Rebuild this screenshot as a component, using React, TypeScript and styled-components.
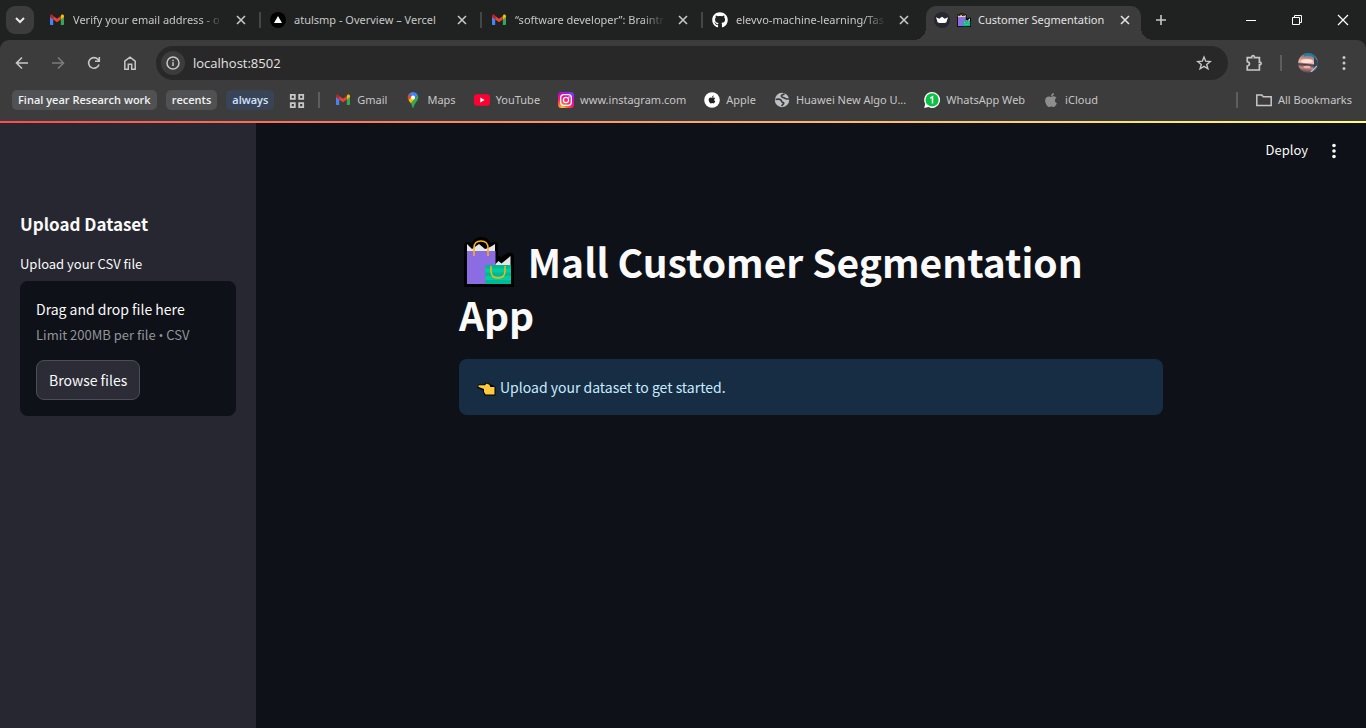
import React from "react";
import styled, { createGlobalStyle, css } from "styled-components";
import { FaApple, FaGithub } from "react-icons/fa";

const labelFont = `"Noto Sans", "Open Sans", sans-serif`;
const uiFont = `"Open Sans", "Noto Sans", sans-serif`;
const appFont = `"Noto Sans CJK SC", "Noto Sans", sans-serif`;

const GlobalStyle = createGlobalStyle`
  * { box-sizing: border-box; }
  html, body { margin: 0; background: #0e1117; }
  button { border: 0; padding: 0; background: none; color: inherit; font: inherit; cursor: pointer; }
  a { color: inherit; text-decoration: none; }
  svg { display: block; flex: none; }
`;

const Page = styled.div`
  min-height: 100vh;
  display: flex;
  flex-direction: column;
`;

const Chrome = styled.header`
  background: #202222;
  color: #c7c7c7;
  font-family: ${labelFont};
  font-size: 11px;
`;

const TabStrip = styled.div`
  display: flex;
  align-items: center;
  height: 40px;
  padding-left: 6px;
`;

const TabSearch = styled.button`
  display: grid;
  place-items: center;
  flex: none;
  width: 28px;
  height: 28px;
  margin-right: 6px;
  border-radius: 9px;
  background: #3c3c3c;
  color: #e8e8e8;
`;

const Tabs = styled.nav`
  display: flex;
  flex: 0 1 1101px;
  min-width: 0;
`;

const Tab = styled.div<{ $active?: boolean; $divider?: boolean }>`
  display: flex;
  align-items: center;
  gap: 8px;
  flex: 0 1 221px;
  min-width: 0;
  height: 40px;
  padding: 0 10px 0 9px;
  position: relative;
  ${(p) =>
    p.$divider &&
    css`
      background: linear-gradient(#454746, #454746) right center / 2px 16px no-repeat;
    `}
  ${(p) =>
    p.$active &&
    css`
      flex-basis: 215px;
      gap: 7px;
      height: 34px;
      margin: 6px 0 0 2px;
      padding: 0 6px 6px 8px;
      border-radius: 10px 10px 0 0;
      background: #3c3c3c;
      color: #e3e3e3;
      &::before,
      &::after {
        content: "";
        position: absolute;
        bottom: 0;
        width: 12px;
        height: 12px;
      }
      &::before {
        right: 100%;
        background: radial-gradient(circle at 0 0, transparent 12px, #3c3c3c 12px);
      }
      &::after {
        left: 100%;
        background: radial-gradient(circle at 100% 0, transparent 12px, #3c3c3c 12px);
      }
    `}
`;

const TabTitle = styled.a<{ $fade?: boolean }>`
  flex: 1;
  min-width: 0;
  overflow: hidden;
  white-space: nowrap;
  line-height: 20px;
  ${(p) => p.$fade && css`mask-image: linear-gradient(to right, #000 85%, transparent);`}
`;

const IconButton = styled.button<{ $size?: number; $dim?: boolean }>`
  display: grid;
  place-items: center;
  flex: none;
  width: ${(p) => p.$size ?? 36}px;
  height: ${(p) => p.$size ?? 36}px;
  ${(p) => p.$dim && css`color: #7b7b7b;`}
`;

const WindowControls = styled.div`
  display: flex;
  margin-left: auto;
  color: #fff;
`;

const WindowButton = styled.button`
  display: grid;
  place-items: center;
  width: 46px;
  height: 40px;
`;

const Toolbar = styled.div`
  display: flex;
  align-items: center;
  height: 46px;
  padding: 0 4px;
  border-radius: 9px 9px 0 0;
  background: #3c3c3c;
`;

const AddressBar = styled.form`
  display: flex;
  align-items: center;
  flex: 1;
  gap: 8px;
  height: 34px;
  margin: 0 8px;
  padding: 0 6px 0 5px;
  border-radius: 17px;
  background: #282828;
`;

const SiteInfo = styled.button`
  display: grid;
  place-items: center;
  width: 24px;
  height: 24px;
  border-radius: 50%;
  background: #3c3c3c;
`;

const Address = styled.input`
  flex: 1;
  min-width: 0;
  border: 0;
  padding: 0;
  outline: 0;
  background: none;
  color: #e3e3e3;
  font: 13px/20px ${uiFont};
`;

const Divider = styled.span`
  flex: none;
  width: 2px;
  height: 16px;
  background: #5e5e5e;
`;

const ProfileArea = styled.div`
  display: flex;
  align-items: center;
  gap: 16px;
  margin: 0 8px;
`;

const Bookmarks = styled.nav`
  display: flex;
  align-items: center;
  gap: 15px;
  height: 35px;
  padding: 0 14px 7px 12px;
  background: #3c3c3c;
  white-space: nowrap;
`;

const Groups = styled.div`
  display: flex;
  gap: 9px;
`;

const Group = styled.button<{ $blue?: boolean }>`
  height: 20px;
  padding: 0 6px;
  border-radius: 5px;
  background: ${(p) => (p.$blue ? "#394457" : "#4f5152")};
  color: ${(p) => (p.$blue ? "#d3e3fd" : "#f1f1f1")};
  font: 600 11px/20px ${uiFont};
`;

const BookmarkList = styled.div`
  display: flex;
  align-items: center;
  gap: 18px;
`;

const Bookmark = styled.a`
  display: flex;
  align-items: center;
  gap: 6px;
  line-height: 20px;
`;

const BookmarksEnd = styled(BookmarkList)`
  margin-left: auto;
`;

const Decoration = styled.div`
  height: 2px;
  background: linear-gradient(to right, #ff4b4b, #ffff80);
`;

const AppShell = styled.div`
  display: flex;
  flex: 1;
  color: #fafafa;
  font-family: ${appFont};
`;

const Sidebar = styled.aside`
  flex: none;
  width: 256px;
  padding: 87px 20px 24px;
  background: #262730;
`;

const SidebarTitle = styled.h2`
  margin: 0 0 16px;
  font-size: 17px;
  line-height: 28px;
  font-weight: 700;
`;

const UploadLabel = styled.label`
  display: block;
  margin-bottom: 7px;
  font-size: 13px;
  line-height: 20px;
`;

const Dropzone = styled.section`
  padding: 15px 16px 16px;
  border-radius: 8px;
  background: #0e1117;
`;

const DropText = styled.div`
  font-size: 14px;
  line-height: 26px;
`;

const DropHint = styled.small`
  display: block;
  margin-bottom: 12px;
  color: #93959a;
  font-size: 13px;
  line-height: 26px;
`;

const Bullet = styled.span`
  font-family: ${uiFont};
  line-height: 1;
`;

const BrowseButton = styled.button`
  height: 40px;
  padding: 0 12px;
  border: 1px solid #4c4d55;
  border-radius: 8px;
  background: #2b2c36;
  font: 14px/24px ${appFont};
`;

const Main = styled.main`
  flex: 1;
  min-width: 0;
`;

const AppHeader = styled.div`
  display: flex;
  justify-content: flex-end;
  align-items: center;
  gap: 18px;
  height: 56px;
  padding: 0 24px;
  font-size: 13px;
`;

const DeployButton = styled.button`
  padding-bottom: 3px;
`;

const Content = styled.div`
  max-width: 704px;
  margin: 0 auto;
  padding-top: 56px;
`;

const Title = styled.h1`
  margin: 0 0 18px;
  font-size: 39px;
  line-height: 53px;
  font-weight: 700;
  svg { display: inline-block; vertical-align: -9px; margin: 0 5px; }
`;

const Alert = styled.div`
  display: flex;
  align-items: center;
  gap: 4px;
  padding: 16px 18px;
  border-radius: 8px;
  background: #172d43;
  color: #c7ebff;
  font-size: 14px;
  line-height: 24px;
  svg { margin-top: 4px; }
`;

const Gmail = () => (
  <svg width="16" height="16" viewBox="0 0 16 16">
    <path d="M1 4.500v7.600c0 .6.4 1 1 1h2.200V6.900z" fill="#4285f4" />
    <path d="M15 4.500v7.600c0 .6-.4 1-1 1h-2.200V6.900z" fill="#34a853" />
    <path d="M11.800 4v3.400L15 5V4c0-1.500-1.600-2-2.600-1.300z" fill="#fbbc04" />
    <path d="M4.200 7.400V4L8 6.800 11.800 4v3.400L8 10.300z" fill="#ea4335" />
    <path d="M1 4v1l3.200 2.400V4l-.6-1.300C2.600 2 1 2.500 1 4z" fill="#c5221f" />
  </svg>
);

const Vercel = () => (
  <svg width="16" height="16" viewBox="0 0 16 16">
    <circle cx="8" cy="8" r="8" fill="#000" />
    <path d="M8 4l4 7H4z" fill="#fff" />
  </svg>
);

const Crown = () => (
  <svg width="16" height="16" viewBox="0 0 16 16">
    <circle cx="8" cy="8" r="8" fill="#262730" />
    <path d="M2 5.300l3.200 1.500L8 4.800l2.800 2L14 5.300l-1.700 5.200q-4.300 1-8.600 0z" fill="#fff" />
  </svg>
);

const Bags = ({ size }: { size: number }) => (
  <svg width={size} height={size} viewBox="0 0 50 50">
    <path d="M0 50V9q1-5 5-4l3 1Q11 0 17 0q7 0 9 6l3-1q5-1 5 4v10l3 1 7-4q6-1 6 4v30z" fill="#000" />
    <path d="M3 14V7l4 4 1 1 7-5 6 5 3-1 4-2 3-2v7z" fill="#e6e6e6" />
    <path d="M3 14h28.500v33H3z" fill="#8c6ce3" />
    <path d="M31.500 28v-1l3-3 3 2.500 9-7.500V28z" fill="#e6e6e6" />
    <path d="M21.500 28H47v19H21.500z" fill="#00b894" />
    <path d="M21.500 31.500H47v4H21.500zM21.500 39H47v4H21.500z" fill="#00ce9f" />
    <path d="M10 19V11q0-7 7-7t7 7v8" fill="none" stroke="#fdb50a" strokeWidth="1.500" />
    <path d="M27 29v5q0 7 7 7t7-7v-5" fill="none" stroke="#fdb50a" strokeWidth="1.500" />
  </svg>
);

const Hand = () => (
  <svg width="19" height="16" viewBox="0 0 19 16">
    <path d="M1 3.500h6L9 1.500l4 1.500 5.500 3v8.500H7.500L5.500 9 .5 7z" fill="#000" />
    <path d="M1.300 5c0-.5.400-.8 1-.8H8l1.500-1.700 3 1.300.8 2.200H17.500v7.500H8.600L7 11V8L2.300 6.200c-.7-.2-1-.6-1-1.200z" fill="#ffc83d" />
  </svg>
);

const Close = () => (
  <svg width="10" height="10" viewBox="0 0 10 10" fill="none" stroke="currentColor" strokeWidth="1.600">
    <path d="M1 1l8 8M9 1L1 9" />
  </svg>
);

const Dots = ({ r = 1.5 }: { r?: number }) => (
  <svg width="16" height="16" viewBox="0 0 16 16" fill="currentColor">
    <circle cx="8" cy="2.500" r={r} />
    <circle cx="8" cy="8" r={r} />
    <circle cx="8" cy="13.500" r={r} />
  </svg>
);

const Line = ({ d, size = 16, width = 1.6 }: { d: string; size?: number; width?: number }) => (
  <svg width={size} height={size} viewBox="0 0 16 16" fill="none" stroke="currentColor" strokeWidth={width}>
    <path d={d} />
  </svg>
);

const Maps = () => (
  <svg width="16" height="16" viewBox="0 0 16 16">
    <path d="M3.800 2.100L6.600 4.400 3.500 8A5.500 5.500 0 0 1 3.800 2.100z" fill="#ea4335" />
    <path d="M3.800 2.100A5.400 5.400 0 0 1 12.800 3.100L9.700 6.500 6.600 4.400z" fill="#4285f4" />
    <path d="M12.800 3.100a5.500 5.500 0 0 1-.5 5.300C10.500 11 9.200 12.500 8.600 15.300c-.2.900-1 .9-1.200 0C7 13.600 6.500 12.300 5.700 11z" fill="#34a853" />
    <path d="M3.500 8l3.100-3.600 3.200 2.400-4.100 4.400C4.900 10 4 9 3.500 8z" fill="#fbbc04" />
    <circle cx="8" cy="5.400" r="2" fill="#fff" />
  </svg>
);

const YouTube = () => (
  <svg width="16" height="16" viewBox="0 0 16 16">
    <rect y="2.300" width="16" height="11.400" rx="3" fill="#ff0033" />
    <path d="M6.300 5.500v5L10.600 8z" fill="#fff" />
  </svg>
);

const Instagram = () => (
  <svg width="16" height="16" viewBox="0 0 16 16">
    <defs>
      <radialGradient id="ig" cx="0.25" cy="1.050" r="1.100">
        <stop offset="0" stopColor="#fd5" />
        <stop offset="0.25" stopColor="#ff7a2f" />
        <stop offset="0.550" stopColor="#ff1b6b" />
        <stop offset="0.850" stopColor="#d300c5" />
        <stop offset="1" stopColor="#7638fa" />
      </radialGradient>
    </defs>
    <rect width="16" height="16" rx="3.500" fill="url(#ig)" />
    <g fill="none" stroke="#fff" strokeWidth="1.300">
      <rect x="2.700" y="2.700" width="10.600" height="10.600" rx="3" />
      <circle cx="8" cy="8" r="2.600" />
    </g>
    <circle cx="11" cy="5" r="0.700" fill="#fff" />
  </svg>
);

const AppleBadge = () => (
  <svg width="16" height="16" viewBox="0 0 16 16">
    <circle cx="8" cy="8" r="7.800" fill="#fff" />
    <FaApple x="3.500" y="3" width="9" height="9.500" size="9" color="#222" />
  </svg>
);

const Globe = () => (
  <svg width="16" height="16" viewBox="0 0 16 16">
    <circle cx="8" cy="8" r="7.200" fill="#bdc1c6" />
    <path
      d="M1.500 7.500c2-.6 4.500-.4 5.500.6s.2 2 1.600 2.200 1.400 1 .4 2L7.600 14M10.500 1.500c-.6 1.500-3.200.9-3.200 2.600 0 1.600 2.200 1.100 3.200 2 .9.800 2.500 1.200 4.500.6"
      fill="none"
      stroke="#3c3c3c"
      strokeWidth="1.700"
    />
  </svg>
);

const WhatsApp = () => (
  <svg width="16" height="16" viewBox="0 0 16 16">
    <path d="M8 0a8 8 0 1 1-3.600 15.100L.2 16l1-4A8 8 0 0 1 8 0z" fill="#fff" />
    <circle cx="8.100" cy="7.900" r="6.600" fill="#0ac144" />
    <path d="M6.200 6.200L8.500 4.800v6.700" fill="none" stroke="#fff" strokeWidth="1.500" />
  </svg>
);

const Sunset = () => (
  <svg width="20" height="20" viewBox="0 0 20 20">
    <defs>
      <linearGradient id="sky" x1="0.100" y1="0" x2="0" y2="1">
        <stop offset="0" stopColor="#4a6f84" />
        <stop offset="0.250" stopColor="#c98d86" />
        <stop offset="0.450" stopColor="#f6c5b4" />
        <stop offset="0.540" stopColor="#4a3a45" />
        <stop offset="0.700" stopColor="#c98a84" />
        <stop offset="1" stopColor="#352f40" />
      </linearGradient>
      <clipPath id="face">
        <circle cx="10" cy="10" r="10" />
      </clipPath>
    </defs>
    <g clipPath="url(#face)">
      <rect width="20" height="20" fill="url(#sky)" />
      <path d="M6 2Q13-1 18 5" fill="none" stroke="#1d7f9b" strokeWidth="3" />
      <ellipse cx="9" cy="8" rx="6" ry="2" fill="#ffe0d6" />
      <path d="M16 4l4 4v7l-5 3 1-7z" fill="#2b4258" />
      <ellipse cx="9" cy="14" rx="3.500" ry="1.200" fill="#e8b4aa" />
      <path d="M13 19l6-6" stroke="#a9c0d2" strokeWidth="1.500" />
    </g>
  </svg>
);

const tabs = [
  { icon: <Gmail />, title: "Verify your email address - o", fade: true },
  { icon: <Vercel />, title: "atulsmp - Overview – Vercel" },
  { icon: <Gmail />, title: "“software developer”: Braintr", fade: true },
  { icon: <FaGithub size={16} color="#fff" />, title: "elevvo-machine-learning/Tas", fade: true },
];

const bookmarks = [
  { icon: <Gmail />, label: "Gmail" },
  { icon: <Maps />, label: "Maps" },
  { icon: <YouTube />, label: "YouTube" },
  { icon: <Instagram />, label: "www.instagram.com" },
  { icon: <AppleBadge />, label: "Apple" },
  { icon: <Globe />, label: "Huawei New Algo U..." },
  { icon: <WhatsApp />, label: "WhatsApp Web" },
  { icon: <FaApple size={16} color="#8e8e8e" />, label: "iCloud" },
];

export default function App() {
  return (
    <Page>
      <GlobalStyle />
      <Chrome>
        <TabStrip>
          <TabSearch aria-label="Search tabs">
            <Line d="M4 6l4 4 4-4" width={2} />
          </TabSearch>
          <Tabs>
            {tabs.map((tab, i) => (
              <Tab key={tab.title} $divider={i < tabs.length - 1}>
                {tab.icon}
                <TabTitle href="#" $fade={tab.fade}>{tab.title}</TabTitle>
                <IconButton $size={20} aria-label="Close tab"><Close /></IconButton>
              </Tab>
            ))}
            <Tab $active>
              <Crown />
              <Bags size={14} />
              <TabTitle href="#">Customer Segmentation</TabTitle>
              <IconButton $size={20} aria-label="Close tab"><Close /></IconButton>
            </Tab>
          </Tabs>
          <IconButton $size={40} aria-label="New tab">
            <Line d="M8 3v10M3 8h10" />
          </IconButton>
          <WindowControls>
            <WindowButton aria-label="Minimize">
              <Line d="M3 8.500h10" width={1} />
            </WindowButton>
            <WindowButton aria-label="Restore">
              <Line d="M3.500 5.500h7v7h-7zM5.500 5.500v-2h7v7h-2" width={1} />
            </WindowButton>
            <WindowButton aria-label="Close window">
              <Line d="M3 3l10 10M13 3L3 13" width={1.2} />
            </WindowButton>
          </WindowControls>
        </TabStrip>
        <Toolbar>
          <IconButton aria-label="Back"><Line d="M14 8H3M8 2.500L2.500 8 8 13.500" /></IconButton>
          <IconButton $dim aria-label="Forward"><Line d="M2 8h11M8 2.500L13.500 8 8 13.500" /></IconButton>
          <IconButton aria-label="Reload">
            <Line d="M13 9.500A5.300 5.300 0 1 1 11.800 4.300L13 5.500M13.300 2v4.200H9" />
          </IconButton>
          <IconButton aria-label="Home">
            <Line d="M2.800 6.200L8 2.200l5.200 4v8h-3.500V9.300H6.300v4.900H2.800z" width={1.5} />
          </IconButton>
          <AddressBar onSubmit={(e) => e.preventDefault()}>
            <SiteInfo type="button" aria-label="Site information">
              <svg width="16" height="16" viewBox="0 0 16 16" fill="none" stroke="currentColor" strokeWidth="1.500">
                <circle cx="8" cy="8" r="6" />
                <path d="M8 7.300v3.700M8 4.700v1.500" />
              </svg>
            </SiteInfo>
            <Address aria-label="Address" defaultValue="localhost:8502" />
            <IconButton type="button" aria-label="Bookmark this page">
              <Line d="M8 2l1.700 4.200 4.500.3-3.500 2.900 1.200 4.400L8 11.300l-3.900 2.500 1.200-4.400L1.800 6.500l4.500-.3z" width={1.4} />
            </IconButton>
          </AddressBar>
          <IconButton aria-label="Extensions">
            <Line
              d="M2 3.300h4c-.6-2.400 3-2.400 2.400 0h4.400v4c2-.4 2 2.600 0 2.200v4.700H2v-3.500c2.600-.5 2.600-3.400 0-3.900z"
              size={18}
              width={1.5}
            />
          </IconButton>
          <ProfileArea>
            <Divider />
            <button aria-label="Profile"><Sunset /></button>
          </ProfileArea>
          <IconButton aria-label="Browser menu"><Dots /></IconButton>
        </Toolbar>
        <Bookmarks>
          <Groups>
            <Group>Final year Research work</Group>
            <Group>recents</Group>
            <Group $blue>always</Group>
          </Groups>
          <IconButton $size={14} aria-label="Apps">
            <Line d="M1.800 1.800h4v4h-4zM10.200 1.800h4v4h-4zM1.800 10.200h4v4h-4zM10.200 10.200h4v4h-4z" width={1.8} />
          </IconButton>
          <Divider />
          <BookmarkList>
            {bookmarks.map((b) => (
              <Bookmark key={b.label} href="#">
                {b.icon}
                {b.label}
              </Bookmark>
            ))}
          </BookmarkList>
          <BookmarksEnd>
            <Divider />
            <Bookmark href="#">
              <Line d="M.8 3h5l1.500 1.800h7.900v8.700H.8z" width={1.5} />
              All Bookmarks
            </Bookmark>
          </BookmarksEnd>
        </Bookmarks>
      </Chrome>
      <Decoration />
      <AppShell>
        <Sidebar>
          <SidebarTitle>Upload Dataset</SidebarTitle>
          <UploadLabel htmlFor="browse">Upload your CSV file</UploadLabel>
          <Dropzone>
            <DropText>Drag and drop file here</DropText>
            <DropHint>Limit 200MB per file <Bullet>•</Bullet> CSV</DropHint>
            <BrowseButton id="browse">Browse files</BrowseButton>
          </Dropzone>
        </Sidebar>
        <Main>
          <AppHeader>
            <DeployButton>Deploy</DeployButton>
            <button aria-label="Main menu"><Dots r={1.8} /></button>
          </AppHeader>
          <Content>
            <Title>
              <Bags size={50} /> Mall Customer Segmentation App
            </Title>
            <Alert>
              <Hand />
              Upload your dataset to get started.
            </Alert>
          </Content>
        </Main>
      </AppShell>
    </Page>
  );
}
